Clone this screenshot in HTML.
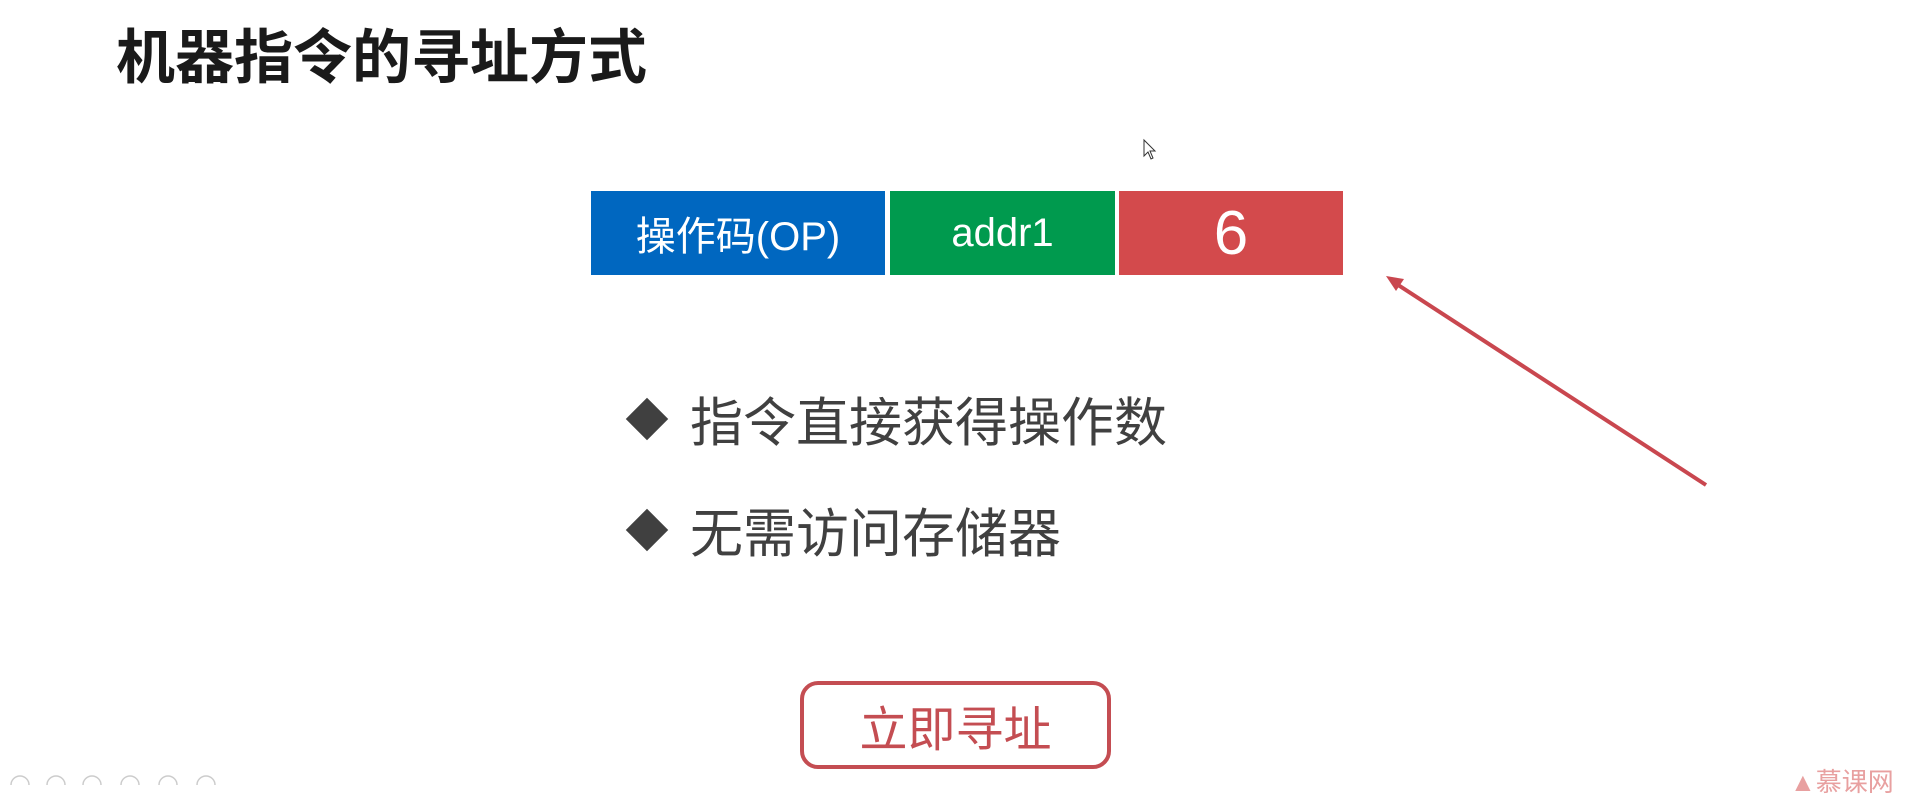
<!DOCTYPE html>
<html><head><meta charset="utf-8"><style>
html,body{margin:0;padding:0;width:1920px;height:785px;overflow:hidden;background:#fff;font-family:"Liberation Sans","Noto Sans CJK SC",sans-serif;}
.a{position:absolute;}
.title{left:116px;top:10px;font-size:59px;font-weight:bold;color:#1a1a1a;letter-spacing:0px;}
.box{position:absolute;top:191px;height:84px;color:#fff;display:flex;align-items:center;justify-content:center;}
.bl{display:flex;align-items:center;left:626px;font-size:53px;color:#404040;}
.dia{width:30px;height:30px;background:#404040;transform:rotate(45deg);margin-left:6px;margin-right:28px;}
.btn{left:800px;top:681px;width:303px;height:80px;border:4px solid #c44d52;border-radius:18px;color:#c44d52;font-size:48px;display:flex;align-items:center;justify-content:center;}
</style></head><body>
<div class="a title">机器指令的寻址方式</div>
<div class="box" style="left:591px;width:294px;background:#0067c0;font-size:40px;">操作码(OP)</div>
<div class="box" style="left:890px;width:225px;background:#009a4e;font-size:40px;">addr1</div>
<div class="box" style="left:1119px;width:224px;background:#d34a4c;font-size:62px;">6</div>
<div class="a bl" style="top:381px;"><div class="dia"></div>指令直接获得操作数</div>
<div class="a bl" style="top:492px;"><div class="dia"></div>无需访问存储器</div>
<svg class="a" style="left:0;top:0" width="1920" height="785">
<line x1="1706" y1="485" x2="1395" y2="283" stroke="#c9474f" stroke-width="4"/>
<polygon points="1386,276 1404,279 1396,291" fill="#c9474f"/>
<path d="M1144,140 l0,16 l4,-4 l3,7 l2,-1 l-3,-7 l5,0 z" fill="#fff" stroke="#333" stroke-width="1"/>
<g fill="none" stroke="#ccc" stroke-width="1.5">
<circle cx="20" cy="785" r="9"/><circle cx="56" cy="785" r="9"/><circle cx="92" cy="785" r="9"/><circle cx="130" cy="785" r="9"/><circle cx="168" cy="785" r="9"/><circle cx="206" cy="785" r="9"/>
</g>
</svg>
<div class="a btn">立即寻址</div>
<div class="a" style="left:1790px;top:762px;font-size:26px;color:#e8a0a0;">▲慕课网</div>
</body></html>
